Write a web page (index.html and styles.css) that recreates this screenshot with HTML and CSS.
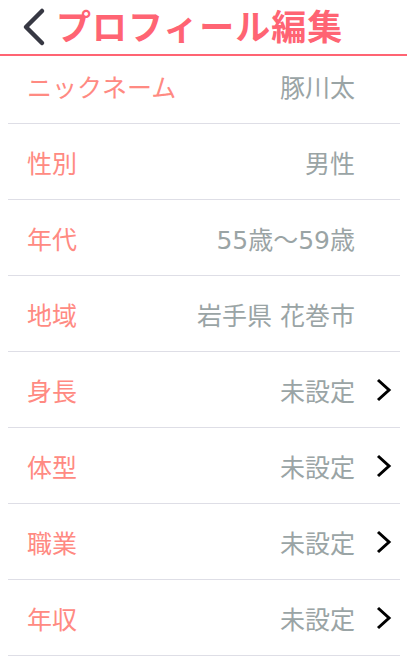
FILE: index.html
```html
<!DOCTYPE html>
<html lang="ja">
<head>
  <meta charset="UTF-8">
  <title>プロフィール編集</title>
  <link rel="stylesheet" href="styles.css">
</head>
<body>
  <header class="header">
    <svg class="back" width="28" height="40" viewBox="0 0 28 40">
      <path d="M22 4 L6 20 L22 36" fill="none" stroke="#373843" stroke-width="4.5" stroke-linecap="round" stroke-linejoin="round"/>
    </svg>
    <h1 class="title">プロフィール編集</h1>
  </header>

  <ul class="list">
    <li class="row first">
      <span class="label">ニックネーム</span>
      <span class="value">豚川太</span>
      <span class="arrow"></span>
    </li>
    <li class="row">
      <span class="label">性別</span>
      <span class="value">男性</span>
      <span class="arrow"></span>
    </li>
    <li class="row">
      <span class="label">年代</span>
      <span class="value">55歳〜59歳</span>
      <span class="arrow"></span>
    </li>
    <li class="row">
      <span class="label">地域</span>
      <span class="value">岩手県 花巻市</span>
      <span class="arrow"></span>
    </li>
    <li class="row">
      <span class="label">身長</span>
      <span class="value">未設定</span>
      <span class="arrow"><svg width="16" height="24" viewBox="0 0 16 24"><path d="M2 2 L13 12 L2 22" fill="none" stroke="#000" stroke-width="3"/></svg></span>
    </li>
    <li class="row">
      <span class="label">体型</span>
      <span class="value">未設定</span>
      <span class="arrow"><svg width="16" height="24" viewBox="0 0 16 24"><path d="M2 2 L13 12 L2 22" fill="none" stroke="#000" stroke-width="3"/></svg></span>
    </li>
    <li class="row">
      <span class="label">職業</span>
      <span class="value">未設定</span>
      <span class="arrow"><svg width="16" height="24" viewBox="0 0 16 24"><path d="M2 2 L13 12 L2 22" fill="none" stroke="#000" stroke-width="3"/></svg></span>
    </li>
    <li class="row">
      <span class="label">年収</span>
      <span class="value">未設定</span>
      <span class="arrow"><svg width="16" height="24" viewBox="0 0 16 24"><path d="M2 2 L13 12 L2 22" fill="none" stroke="#000" stroke-width="3"/></svg></span>
    </li>
  </ul>
</body>
</html>
```

FILE: styles.css
```css
body {
  margin: 0;
  background: #fff;
  font-family: "Liberation Sans", "Noto Sans CJK JP", sans-serif;
  overflow: hidden;
}

.header {
  height: 54px;
  display: flex;
  align-items: center;
  padding-left: 20px;
  border-bottom: 2px solid #ff6473;
}

.back {
  display: block;
  margin-right: 8px;
}

.title {
  margin: 0;
  font-size: 35px;
  font-weight: bold;
  color: #ff6473;
  line-height: 1;
  letter-spacing: 1px;
}

.list {
  list-style: none;
  margin: 0 7px 0 8px;
  padding: 0;
}

.row {
  height: 75px;
  display: flex;
  align-items: center;
  padding: 0 8px 0 19px;
  border-bottom: 1.5px solid #dedee6;
  font-size: 25px;
}

.row.first {
  height: 60px;
  padding-bottom: 7px;
}

.label {
  color: #ff8a82;
  flex: 1;
}

.value {
  color: #9aa4a5;
  font-family: "DejaVu Sans", "Noto Sans CJK JP", sans-serif;
}

.arrow {
  width: 37px;
  display: flex;
  justify-content: flex-end;
}

.arrow svg {
  display: block;
}
```
